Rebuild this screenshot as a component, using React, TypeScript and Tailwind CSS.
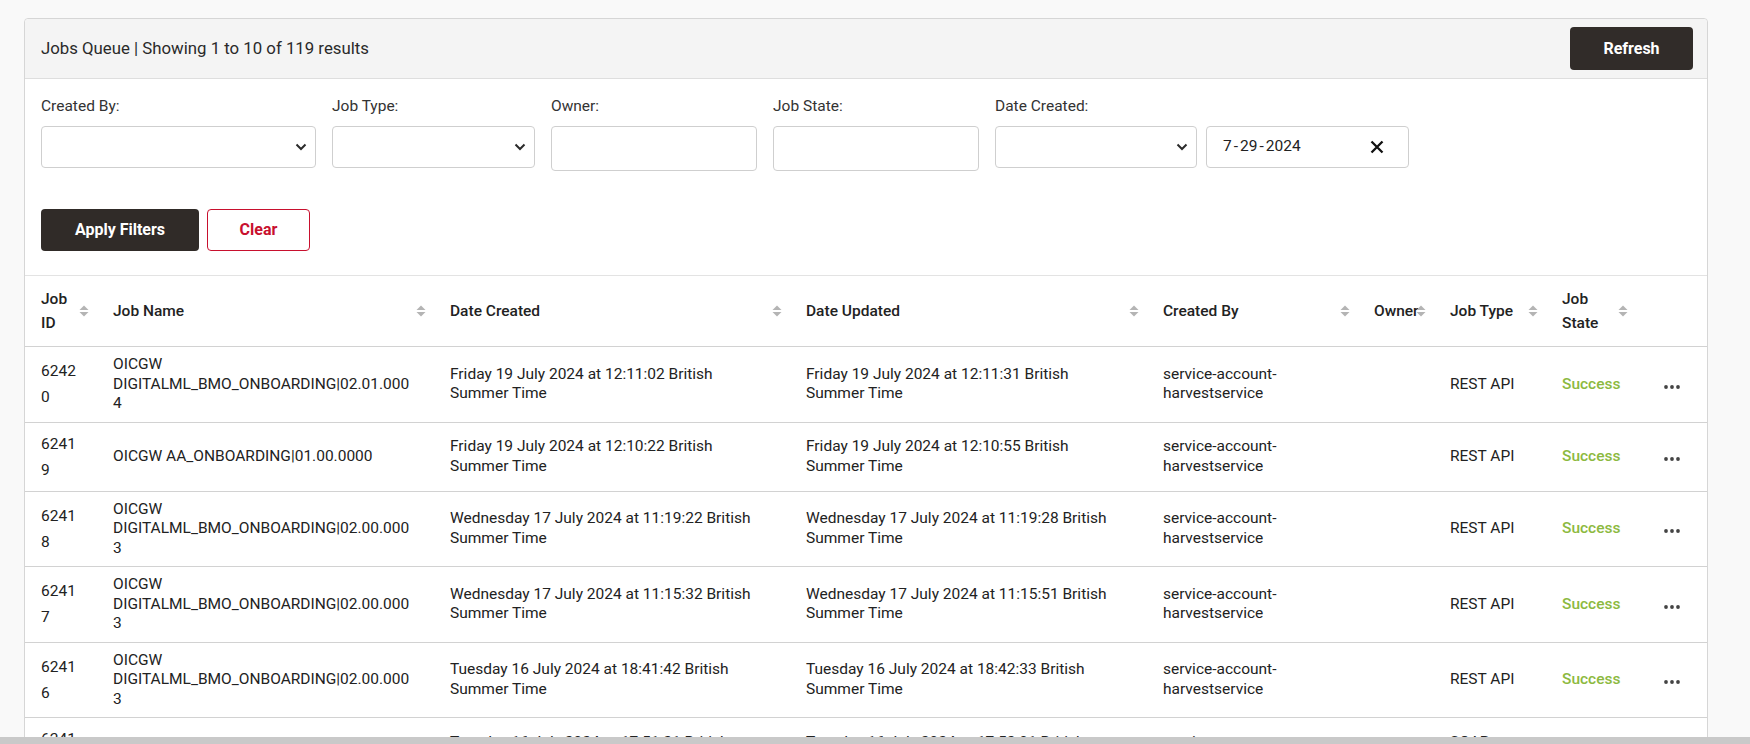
import React from 'react';

type Job = {
  id: string;
  name: string;
  created: string;
  updated: string;
  createdBy: string;
  owner: string;
  type: string;
  state: string;
};

const jobs: Job[] = [
  {
    id: '62420',
    name: 'OICGW DIGITALML_BMO_ONBOARDING|02.01.0004',
    created: 'Friday 19 July 2024 at 12:11:02 British Summer Time',
    updated: 'Friday 19 July 2024 at 12:11:31 British Summer Time',
    createdBy: 'service-account-harvestservice',
    owner: '',
    type: 'REST API',
    state: 'Success',
  },
  {
    id: '62419',
    name: 'OICGW AA_ONBOARDING|01.00.0000',
    created: 'Friday 19 July 2024 at 12:10:22 British Summer Time',
    updated: 'Friday 19 July 2024 at 12:10:55 British Summer Time',
    createdBy: 'service-account-harvestservice',
    owner: '',
    type: 'REST API',
    state: 'Success',
  },
  {
    id: '62418',
    name: 'OICGW DIGITALML_BMO_ONBOARDING|02.00.0003',
    created: 'Wednesday 17 July 2024 at 11:19:22 British Summer Time',
    updated: 'Wednesday 17 July 2024 at 11:19:28 British Summer Time',
    createdBy: 'service-account-harvestservice',
    owner: '',
    type: 'REST API',
    state: 'Success',
  },
  {
    id: '62417',
    name: 'OICGW DIGITALML_BMO_ONBOARDING|02.00.0003',
    created: 'Wednesday 17 July 2024 at 11:15:32 British Summer Time',
    updated: 'Wednesday 17 July 2024 at 11:15:51 British Summer Time',
    createdBy: 'service-account-harvestservice',
    owner: '',
    type: 'REST API',
    state: 'Success',
  },
  {
    id: '62416',
    name: 'OICGW DIGITALML_BMO_ONBOARDING|02.00.0003',
    created: 'Tuesday 16 July 2024 at 18:41:42 British Summer Time',
    updated: 'Tuesday 16 July 2024 at 18:42:33 British Summer Time',
    createdBy: 'service-account-harvestservice',
    owner: '',
    type: 'REST API',
    state: 'Success',
  },
  {
    id: '62415',
    name: 'OICGW PAYMENTS|01.00.0002',
    created: 'Tuesday 16 July 2024 at 17:51:21 British Summer Time',
    updated: 'Tuesday 16 July 2024 at 17:52:01 British Summer Time',
    createdBy: 'service-account-harvestservice',
    owner: '',
    type: 'SOAP Request',
    state: 'Success',
  },
  {
    id: '62414',
    name: 'OICGW PAYMENTS|01.00.0001',
    created: 'Tuesday 16 July 2024 at 17:40:12 British Summer Time',
    updated: 'Tuesday 16 July 2024 at 17:40:49 British Summer Time',
    createdBy: 'service-account-harvestservice',
    owner: '',
    type: 'REST API',
    state: 'Success',
  },
  {
    id: '62413',
    name: 'OICGW AA_ONBOARDING|01.00.0000',
    created: 'Monday 15 July 2024 at 09:12:05 British Summer Time',
    updated: 'Monday 15 July 2024 at 09:12:37 British Summer Time',
    createdBy: 'service-account-harvestservice',
    owner: '',
    type: 'REST API',
    state: 'Success',
  },
];

const SortIcon = () => (
  <svg
    width="10"
    height="12"
    viewBox="0 0 10 12"
    className="absolute right-2 top-1/2 -translate-y-1/2"
  >
    <path d="M5 0.5 L9.5 5 H0.5 Z" fill="#b4b4b4" />
    <path d="M0.5 7 H9.5 L5 11.5 Z" fill="#b4b4b4" />
  </svg>
);

const Chevron = () => (
  <svg width="12" height="8" viewBox="0 0 12 8" fill="none">
    <path d="M1.5 1.5 L6 6 L10.5 1.5" stroke="#2b2b2b" strokeWidth="2" />
  </svg>
);

const Dots = () => (
  <svg width="16" height="4" viewBox="0 0 16 4">
    <circle cx="2" cy="2" r="1.9" fill="#444" />
    <circle cx="8" cy="2" r="1.9" fill="#444" />
    <circle cx="14" cy="2" r="1.9" fill="#444" />
  </svg>
);

const columns = [
  { label: 'Job ID', col: 'w-[72px]' },
  { label: 'Job Name', col: 'w-[337px]' },
  { label: 'Date Created', col: 'w-[356px]' },
  { label: 'Date Updated', col: 'w-[357px]' },
  { label: 'Created By', col: 'w-[211px]' },
  { label: 'Owner', col: 'w-[76px]' },
  { label: 'Job Type', col: 'w-[112px]' },
  { label: 'Job State', col: 'w-[90px]' },
];

const App: React.FC = () => {
  return (
    <div className="min-h-screen bg-[#f9f9f9] pl-6 pr-[42px] pt-[18px] font-['Roboto',sans-serif] text-[#222]">
      <div className="rounded border border-[#d6d6d6] bg-white">
        {/* Header */}
        <div className="flex h-[60px] items-center justify-between rounded-t border-b border-[#dedede] bg-[#f4f4f4] pl-4 pr-[14px]">
          <span className="text-[16.8px] text-[#2a2a2a]">Jobs Queue | Showing 1 to 10 of 119 results</span>
          <button className="h-[43px] w-[123px] rounded bg-[#312c29] text-[16px] font-bold text-white">
            Refresh
          </button>
        </div>

        {/* Filters */}
        <div className="px-4 pb-6 pt-[17px] text-[15.5px]">
          <div className="flex items-start gap-4">
            <div>
              <label className="mb-[10px] block leading-5 text-[#333]">Created By:</label>
              <div className="flex h-[42px] w-[275px] items-center justify-end rounded border border-[#cfcfcf] pr-2">
                <Chevron />
              </div>
            </div>
            <div>
              <label className="mb-[10px] block leading-5 text-[#333]">Job Type:</label>
              <div className="flex h-[42px] w-[203px] items-center justify-end rounded border border-[#cfcfcf] pr-2">
                <Chevron />
              </div>
            </div>
            <div>
              <label className="mb-[10px] block leading-5 text-[#333]">Owner:</label>
              <input className="h-[45px] w-[206px] rounded border border-[#cfcfcf] px-3 outline-none" />
            </div>
            <div>
              <label className="mb-[10px] block leading-5 text-[#333]">Job State:</label>
              <input className="h-[45px] w-[206px] rounded border border-[#cfcfcf] px-3 outline-none" />
            </div>
            <div>
              <label className="mb-[10px] block leading-5 text-[#333]">Date Created:</label>
              <div className="flex gap-[9px]">
                <div className="flex h-[42px] w-[202px] items-center justify-end rounded border border-[#cfcfcf] pr-2">
                  <Chevron />
                </div>
                <div className="flex h-[42px] w-[203px] items-center justify-between rounded border border-[#cfcfcf] pl-4 pr-6">
                  <span className="text-[#222]">
                    7<span className="px-[2px]">-</span>29<span className="px-[2px]">-</span>2024
                  </span>
                  <svg width="14" height="14" viewBox="0 0 14 14" fill="none">
                    <path d="M1.5 1.5 L12.5 12.5 M12.5 1.5 L1.5 12.5" stroke="#111" strokeWidth="2.3" />
                  </svg>
                </div>
              </div>
            </div>
          </div>

          <div className="mt-[38px] flex gap-2">
            <button className="h-[42px] w-[158px] rounded bg-[#302b28] text-[16px] font-bold text-white">
              Apply Filters
            </button>
            <button className="h-[42px] w-[103px] rounded border border-[#c8102e] bg-white text-[16px] font-bold text-[#c8102e]">
              Clear
            </button>
          </div>
        </div>

        {/* Table */}
        <table className="w-full table-fixed border-collapse text-[15.5px]">
          <colgroup>
            {columns.map((c) => (
              <col key={c.label} className={c.col} />
            ))}
            <col className="w-[71px]" />
          </colgroup>
          <thead>
            <tr className="border-y border-t-[#e3e3e3] border-b-[#d2d2d2]">
              {columns.map((c) => (
                <th
                  key={c.label}
                  className="relative px-4 py-[11px] text-left align-middle font-medium leading-6 text-[#222]"
                >
                  {c.label}
                  <SortIcon />
                </th>
              ))}
              <th />
            </tr>
          </thead>
          <tbody>
            {jobs.map((job) => (
              <tr key={job.id} className="border-b border-[#d2d2d2]">
                <td className="break-words py-2 pl-4 pr-5 align-middle leading-[26px]">{job.id}</td>
                <td className="break-words py-2 pl-4 pr-5 align-middle leading-[19.5px]">{job.name}</td>
                <td className="py-2 pl-4 pr-5 align-middle leading-[19.5px]">{job.created}</td>
                <td className="py-2 pl-4 pr-5 align-middle leading-[19.5px]">{job.updated}</td>
                <td className="py-2 pl-4 pr-5 align-middle leading-[19.5px]">{job.createdBy}</td>
                <td className="py-2 pl-4 pr-5 align-middle leading-[19.5px]">{job.owner}</td>
                <td className="py-2 pl-4 pr-5 align-middle leading-[19.5px]">{job.type}</td>
                <td className="py-2 pl-4 pr-2 align-middle font-medium leading-[19.5px] text-[#8cb940]">
                  {job.state}
                </td>
                <td className="py-2 text-center align-middle">
                  <span className="inline-flex">
                    <Dots />
                  </span>
                </td>
              </tr>
            ))}
          </tbody>
        </table>
      </div>

      <div className="fixed inset-x-0 bottom-0 h-[7px] bg-[#c9c9c9]" />
    </div>
  );
};

export default App;
